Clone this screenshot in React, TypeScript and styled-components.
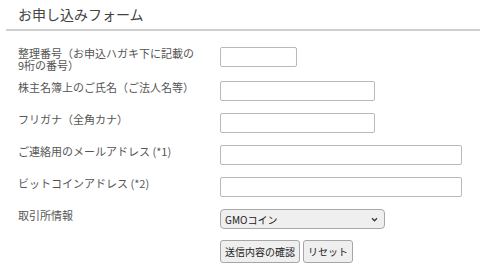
import styled, { createGlobalStyle } from "styled-components";

const GlobalStyle = createGlobalStyle`
  body {
    margin: 0;
    background: #fff;
    font-family: "Noto Sans CJK JP", "DejaVu Sans", sans-serif;
  }
`;

interface Field {
  label: string[];
  width: number;
  height: number;
}

const fields: Field[] = [
  { label: ["整理番号（お申込ハガキ下に記載の", "9桁の番号）"], width: 77, height: 22 },
  { label: ["株主名簿上のご氏名（ご法人名等）"], width: 155, height: 20 },
  { label: ["フリガナ（全角カナ）"], width: 155, height: 20 },
  { label: ["ご連絡用のメールアドレス (*1)"], width: 242, height: 20 },
  { label: ["ビットコインアドレス (*2)"], width: 242, height: 20 },
];

const App = () => {
  return (
    <>
      <GlobalStyle />
      <PageStyle>
        <HeaderStyle>
          <TitleStyle>お申し込みフォーム</TitleStyle>
        </HeaderStyle>

        <FormStyle onSubmit={(e) => e.preventDefault()}>
          {fields.map((f) => (
            <RowStyle key={f.label[0]} $height={f.height}>
              <LabelStyle>
                {f.label.map((line) => (
                  <LabelLine key={line}>{line}</LabelLine>
                ))}
              </LabelStyle>
              <InputStyle type="text" $width={f.width} />
            </RowStyle>
          ))}

          <RowStyle $height={20}>
            <LabelStyle>
              <LabelLine>取引所情報</LabelLine>
            </LabelStyle>
            <SelectWrap>
              <SelectStyle defaultValue="gmo">
                <option value="gmo">GMOコイン</option>
              </SelectStyle>
              <ChevronStyle viewBox="0 0 8 6" width="7" height="5">
                <path d="M1 1.5 L4 4.5 L7 1.5" fill="none" stroke="#333" strokeWidth="1.5" />
              </ChevronStyle>
            </SelectWrap>
          </RowStyle>

          <ButtonRowStyle>
            <LabelStyle />
            <ButtonStyle type="submit">送信内容の確認</ButtonStyle>
            <ButtonStyle type="reset">リセット</ButtonStyle>
          </ButtonRowStyle>
        </FormStyle>
      </PageStyle>
    </>
  );
};

const PageStyle = styled.div`
  width: 480px;
  height: 272px;
  overflow: hidden;
`;

const HeaderStyle = styled.header`
  margin-left: 6px;
  padding: 5px 0 6px 12px;
  border-bottom: 2px solid #cfcfcf;
`;

const TitleStyle = styled.h1`
  margin: 0;
  font-size: 14px;
  line-height: 18px;
  font-weight: normal;
  color: #444;
`;

const FormStyle = styled.form`
  display: flex;
  flex-direction: column;
  gap: 12px;
  padding: 16px 0 0 18px;
`;

const RowStyle = styled.div<{ $height: number }>`
  display: flex;
  align-items: flex-start;
  height: ${({ $height }) => $height}px;
`;

const ButtonRowStyle = styled.div`
  display: flex;
  gap: 3px;
  height: 23px;
  margin-top: -1px;

  & > label {
    margin-right: -3px;
  }
`;

const LabelStyle = styled.label`
  display: flex;
  flex-direction: column;
  width: 202px;
  flex-shrink: 0;
  font-size: 11px;
  color: #555;
`;

const LabelLine = styled.span`
  display: block;
  height: 12px;
  line-height: 12px;
  white-space: nowrap;
`;

const InputStyle = styled.input<{ $width: number }>`
  display: block;
  box-sizing: border-box;
  width: ${({ $width }) => $width}px;
  height: 20px;
  margin: 0;
  border: 1px solid #b9b9b9;
  border-radius: 2px;
  outline: none;
  background: #fff;
`;

const SelectWrap = styled.div`
  position: relative;
  display: flex;
  width: 165px;
  height: 20px;
`;

const SelectStyle = styled.select`
  appearance: none;
  display: block;
  box-sizing: border-box;
  width: 100%;
  height: 20px;
  margin: 0;
  padding: 0 0 0 4px;
  border: 1px solid #a8a8a8;
  border-radius: 4px;
  background: #efefef;
  font-family: "Noto Sans CJK JP", "DejaVu Sans", sans-serif;
  font-size: 10px;
  color: #222;
`;

const ChevronStyle = styled.svg`
  position: absolute;
  right: 7px;
  top: 8px;
  pointer-events: none;
`;

const ButtonStyle = styled.button`
  display: block;
  height: 23px;
  padding: 0 4px;
  margin: 0;
  border: 1px solid #a6a6a6;
  border-radius: 3px;
  background: #efefef;
  font-family: "Noto Sans CJK JP", "DejaVu Sans", sans-serif;
  font-size: 10px;
  color: #222;
`;

export default App;
